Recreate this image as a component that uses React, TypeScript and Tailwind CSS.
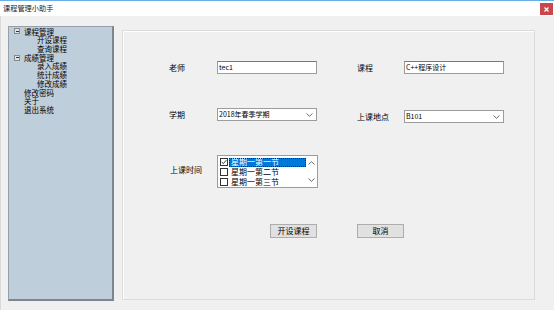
import React from "react";

const CJK = "font-['Noto_Sans_CJK_SC','Noto_Sans',sans-serif]";

function Chevron({ up = false }: { up?: boolean }) {
  return (
    <svg width="7" height="4" viewBox="0 0 7 4" className="block">
      <path
        d={up ? "M0.5 3.5 L3.5 0.7 L6.5 3.5" : "M0.5 0.5 L3.5 3.3 L6.5 0.5"}
        stroke="#5a5a5a"
        strokeWidth="0.9"
        fill="none"
      />
    </svg>
  );
}

function ExpandBox() {
  return (
    <div className="w-[6px] h-[6px] border border-[#8a8a8a] bg-[#dde4ea] flex items-center justify-center mr-[4px]">
      <div className="w-[3px] h-[1px] bg-[#333]" />
    </div>
  );
}

function TreeRow({ text, level, box }: { text: string; level: 0 | 1; box?: boolean }) {
  return (
    <div className={`flex items-center h-[8.73px] ${level === 0 ? (box ? "pl-[5px]" : "pl-[15px]") : "pl-[28px]"}`}>
      {box && <ExpandBox />}
      <span className="text-[7.5px] leading-none text-black whitespace-nowrap">{text}</span>
    </div>
  );
}

function TextBox({ value }: { value: string }) {
  return (
    <div className="w-[100px] h-[13px] bg-white border border-[#9c9c9c] border-t-[#7a7a7a] flex items-center pl-[1px] text-[7px] leading-none text-black whitespace-nowrap">
      {value}
    </div>
  );
}

function Select({ value }: { value: string }) {
  return (
    <div className="w-[100px] h-[13px] bg-white border border-[#9c9c9c] flex items-center justify-between pl-[1px] pr-[3px] text-[7px] leading-none text-black whitespace-nowrap">
      <span>{value}</span>
      <Chevron />
    </div>
  );
}

function Label({ text }: { text: string }) {
  return <span className="text-[8px] leading-none text-black whitespace-nowrap">{text}</span>;
}

function CheckRow({ text, checked, selected }: { text: string; checked?: boolean; selected?: boolean }) {
  return (
    <div className="flex items-center h-[10px]">
      <div className="w-[8px] h-[8px] border border-[#333] bg-white flex items-center justify-center">
        {checked && (
          <svg width="6" height="6" viewBox="0 0 6 6" className="block">
            <path d="M0.7 3 L2.3 4.6 L5.3 1.2" stroke="#222" strokeWidth="0.9" fill="none" />
          </svg>
        )}
      </div>
      <div
        className={`ml-[1px] flex-1 h-[9px] flex items-center pl-[2px] text-[8px] leading-none whitespace-nowrap ${
          selected ? "bg-[#0078d7] text-white outline outline-1 outline-dotted outline-[#0a246a] -outline-offset-1" : "text-black"
        }`}
      >
        {text}
      </div>
    </div>
  );
}

function Button({ text }: { text: string }) {
  return (
    <div className="w-[47px] h-[14px] bg-[#e1e1e1] border border-[#adadad] flex items-center justify-center text-[8px] leading-none text-black">
      {text}
    </div>
  );
}

export default function App() {
  return (
    <div className={`${CJK} w-[554px] h-[310px] bg-[#f0f0f0] flex flex-col overflow-hidden text-[8px] leading-none`}>
      {/* title bar */}
      <div className="h-[16px] bg-white border-t border-[#6aaee6] flex items-start justify-between shrink-0">
        <span className="text-[7.2px] leading-none text-[#222] ml-[3px] mt-[4px] whitespace-nowrap">课程管理小助手</span>
        <div className="w-[13px] h-[12px] bg-[#c8474c] mt-[2px] mr-[1px] flex items-center justify-center">
          <svg width="5" height="5" viewBox="0 0 5 5" className="block">
            <path d="M0.5 0.5 L4.5 4.5 M4.5 0.5 L0.5 4.5" stroke="white" strokeWidth="1.2" />
          </svg>
        </div>
      </div>
      {/* body */}
      <div className="flex-1 flex items-start border-l border-[#dadada] pl-[7px] pt-[10px]">
        {/* tree */}
        <div className="w-[106px] h-[275px] bg-[#bfcedb] border border-[#95a0aa] border-r-2 border-b-2 border-r-[#7d8690] border-b-[#7d8690] flex flex-col">
          <TreeRow text="课程管理" level={0} box />
          <TreeRow text="开设课程" level={1} />
          <TreeRow text="查询课程" level={1} />
          <TreeRow text="成绩管理" level={0} box />
          <TreeRow text="录入成绩" level={1} />
          <TreeRow text="统计成绩" level={1} />
          <TreeRow text="修改成绩" level={1} />
          <TreeRow text="修改密码" level={0} />
          <TreeRow text="关于" level={0} />
          <TreeRow text="退出系统" level={0} />
        </div>
        {/* form panel */}
        <div className="ml-[8px] mt-[4px] w-[413px] h-[270px] border border-[#dcdcdc] shadow-[inset_1px_1px_0_#ffffff] pt-[30px] flex flex-col">
          {/* row 1 */}
          <div className="flex items-center">
            <div className="w-[94px] pl-[46px] flex"><Label text="老师" /></div>
            <TextBox value="tec1" />
            <div className="w-[87px] pl-[40px] flex"><Label text="课程" /></div>
            <TextBox value="C++程序设计" />
          </div>
          {/* row 2 */}
          <div className="flex items-start mt-[34px]">
            <div className="flex items-center">
              <div className="w-[94px] pl-[46px] flex"><Label text="学期" /></div>
              <Select value="2018年春季学期" />
            </div>
            <div className="flex items-center mt-[2px]">
              <div className="w-[87px] pl-[40px] flex"><Label text="上课地点" /></div>
              <Select value="B101" />
            </div>
          </div>
          {/* row 3 */}
          <div className="flex items-center mt-[32px]">
            <div className="w-[94px] pl-[47px] mb-[3px] flex"><Label text="上课时间" /></div>
            <div className="w-[101px] h-[33px] bg-white border border-[#9c9c9c] flex">
              <div className="flex-1 flex flex-col pt-[1px] pl-[2px]">
                <CheckRow text="星期一第一节" checked selected />
                <CheckRow text="星期一第二节" />
                <CheckRow text="星期一第三节" />
              </div>
              <div className="w-[11px] flex flex-col items-center justify-between py-[5px]">
                <Chevron up />
                <Chevron />
              </div>
            </div>
          </div>
          {/* buttons */}
          <div className="flex mt-[36px] pl-[147px] gap-[40px]">
            <Button text="开设课程" />
            <Button text="取消" />
          </div>
        </div>
      </div>
    </div>
  );
}
